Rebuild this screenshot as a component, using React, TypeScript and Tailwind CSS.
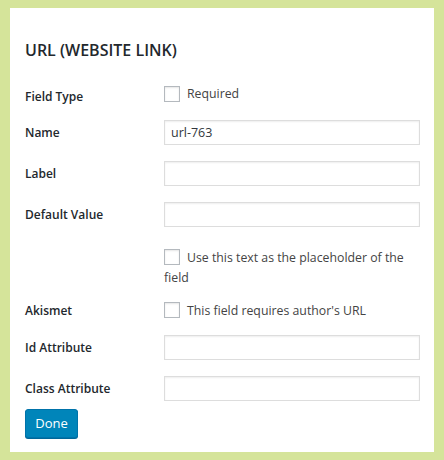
import React from "react";

const Box = () => (
  <span className="inline-block w-[16px] h-[16px] border border-[#b4b9be] bg-white shadow-[inset_0_1px_2px_rgba(0,0,0,0.1)] align-[-3px] mr-[7px] shrink-0" />
);

const Input = ({ value = "" }: { value?: string }) => (
  <input
    readOnly
    value={value}
    className="w-[256px] h-[25px] border border-[#ddd] shadow-[inset_0_1px_2px_rgba(0,0,0,0.07)] px-[6px] text-[12.5px] text-[#32373c] outline-none bg-white"
    style={{ fontFamily: '"Open Sans", sans-serif' }}
  />
);

const Label = ({ children }: { children: React.ReactNode }) => (
  <div className="w-[139px] shrink-0 text-[12px] font-semibold text-[#23282d]">{children}</div>
);

export default function App() {
  return (
    <div className="w-[444px] h-[460px] bg-[#d5e49a] pt-[8px] pl-[10px]" style={{ fontFamily: '"Open Sans", sans-serif' }}>
      <div className="w-[424px] h-[444px] bg-white pl-[15px] flex flex-col">
        <div className="mt-[30px] h-[24px] leading-[24px] text-[16px] font-semibold text-[#23282d]">URL (WEBSITE LINK)</div>

        <div className="mt-[24px] flex h-[16px]">
          <div className="w-[139px] shrink-0 text-[12px] font-semibold text-[#23282d] leading-[16px] pt-[3px]">Field Type</div>
          <div className="flex items-center text-[12.3px] text-[#444] leading-[16px]">
            <Box />
            <span>Required</span>
          </div>
        </div>

        <div className="mt-[18px] flex items-center h-[25px]">
          <Label>Name</Label>
          <Input value="url-763" />
        </div>
        <div className="mt-[16px] flex items-center h-[25px]">
          <Label>Label</Label>
          <Input />
        </div>
        <div className="mt-[16px] flex items-center h-[25px]">
          <Label>Default Value</Label>
          <Input />
        </div>

        <div className="mt-[21px] flex">
          <div className="w-[139px] shrink-0" />
          <div className="w-[256px] text-[12.3px] leading-[20px] text-[#444]">
            <Box />
            Use this text as the placeholder of the field
          </div>
        </div>

        <div className="mt-[13px] flex items-center h-[20px]">
          <Label>Akismet</Label>
          <div className="text-[12.3px] leading-[20px] text-[#444]">
            <Box />
            This field requires author's URL
          </div>
        </div>

        <div className="mt-[14px] flex items-center h-[25px]">
          <Label>Id Attribute</Label>
          <Input />
        </div>
        <div className="mt-[16px] flex items-center h-[25px]">
          <Label>Class Attribute</Label>
          <Input />
        </div>

        <div className="mt-[8px]">
          <button className="w-[53px] h-[29px] rounded-[3px] bg-[#0085ba] border border-[#0073aa] shadow-[0_1px_0_#006799] text-white text-[13px]">
            Done
          </button>
        </div>
      </div>
    </div>
  );
}
